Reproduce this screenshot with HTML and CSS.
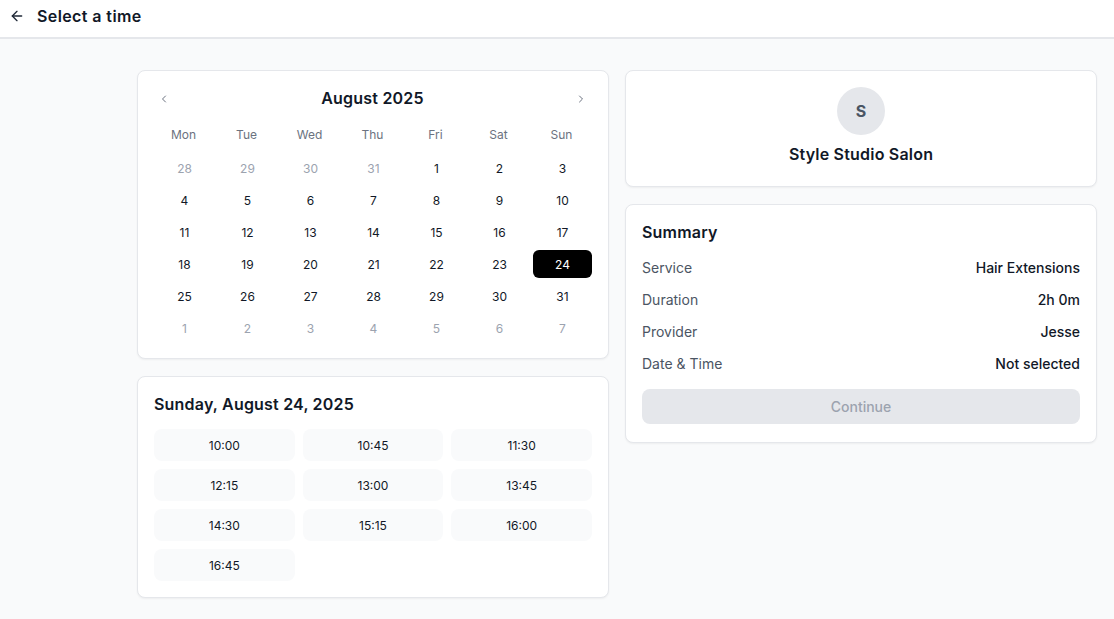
FILE: index.html
```html
<!DOCTYPE html>
<html>
<head>
<meta charset="utf-8">
<link rel="stylesheet" href="styles.css">
</head>
<body>
<header class="topbar">
  <button class="back" aria-label="Back">
    <svg width="16" height="16" viewBox="0 0 24 24" fill="none" stroke="#1f2937" stroke-width="2" stroke-linecap="round" stroke-linejoin="round"><path d="M19 12H5"/><path d="M12 19l-7-7 7-7"/></svg>
  </button>
  <h1 class="title">Select a time</h1>
</header>
<main class="page">
  <div class="col">
    <section class="card calendar">
      <div class="cal-head">
        <button class="nav"><svg width="12" height="12" viewBox="0 0 24 24" fill="none" stroke="#6b7280" stroke-width="2" stroke-linecap="round" stroke-linejoin="round"><path d="M15 18l-6-6 6-6"/></svg></button>
        <div class="month">August 2025</div>
        <button class="nav"><svg width="12" height="12" viewBox="0 0 24 24" fill="none" stroke="#6b7280" stroke-width="2" stroke-linecap="round" stroke-linejoin="round"><path d="M9 18l6-6-6-6"/></svg></button>
      </div>
      <div class="grid">
        <div class="wd">Mon</div><div class="wd">Tue</div><div class="wd">Wed</div><div class="wd">Thu</div><div class="wd">Fri</div><div class="wd">Sat</div><div class="wd">Sun</div>
        <div class="d out">28</div><div class="d out">29</div><div class="d out">30</div><div class="d out">31</div><div class="d">1</div><div class="d">2</div><div class="d">3</div>
        <div class="d">4</div><div class="d">5</div><div class="d">6</div><div class="d">7</div><div class="d">8</div><div class="d">9</div><div class="d">10</div>
        <div class="d">11</div><div class="d">12</div><div class="d">13</div><div class="d">14</div><div class="d">15</div><div class="d">16</div><div class="d">17</div>
        <div class="d">18</div><div class="d">19</div><div class="d">20</div><div class="d">21</div><div class="d">22</div><div class="d">23</div><div class="d sel">24</div>
        <div class="d">25</div><div class="d">26</div><div class="d">27</div><div class="d">28</div><div class="d">29</div><div class="d">30</div><div class="d">31</div>
        <div class="d out">1</div><div class="d out">2</div><div class="d out">3</div><div class="d out">4</div><div class="d out">5</div><div class="d out">6</div><div class="d out">7</div>
      </div>
    </section>
    <section class="card times">
      <h2 class="h2">Sunday, August 24, 2025</h2>
      <div class="slots">
        <button class="slot">10:00</button><button class="slot">10:45</button><button class="slot">11:30</button>
        <button class="slot">12:15</button><button class="slot">13:00</button><button class="slot">13:45</button>
        <button class="slot">14:30</button><button class="slot">15:15</button><button class="slot">16:00</button>
        <button class="slot">16:45</button>
      </div>
    </section>
  </div>
  <div class="col">
    <section class="card salon">
      <div class="avatar">S</div>
      <div class="salon-name">Style Studio Salon</div>
    </section>
    <section class="card summary">
      <h2 class="h2">Summary</h2>
      <div class="row"><span class="lbl">Service</span><span class="val">Hair Extensions</span></div>
      <div class="row"><span class="lbl">Duration</span><span class="val">2h 0m</span></div>
      <div class="row"><span class="lbl">Provider</span><span class="val">Jesse</span></div>
      <div class="row"><span class="lbl">Date &amp; Time</span><span class="val">Not selected</span></div>
      <button class="continue" disabled>Continue</button>
    </section>
  </div>
</main>
</body>
</html>
```
FILE: styles.css
```css
* { box-sizing: border-box; }
html, body { margin: 0; padding: 0; }
body {
  font-family: "Inter", "Open Sans", sans-serif;
  background: #f9fafb;
  color: #111827;
  width: 1114px;
  height: 619px;
  overflow: hidden;
}
button { font-family: inherit; border: 0; background: none; padding: 0; cursor: pointer; }

.topbar {
  height: 39px;
  background: #fff;
  border-bottom: 2px solid #e5e7eb;
  display: flex;
  align-items: center;
  padding: 0 0 5px 9px;
  gap: 12px;
}
.back { display: flex; align-items: center; width: 16px; height: 16px; }
.title { margin: 0; font-size: 16px; font-weight: 600; color: #111827; letter-spacing: 0.4px; }

.page {
  display: flex;
  gap: 16px;
  padding: 31px 17px 0 137px;
}
.col { flex: 1; display: flex; flex-direction: column; gap: 17px; }

.card {
  background: #fff;
  border: 1px solid #e5e7eb;
  border-radius: 8px;
  box-shadow: 0 1px 2px rgba(0,0,0,0.05);
  padding: 16px;
}

.calendar { padding: 15px 15px 14px 14px; }
.cal-head {
  display: flex;
  align-items: center;
  justify-content: space-between;
  height: 24px;
  padding: 0 6px 0 6px;
  margin-bottom: 10px;
}
.nav { display: flex; width: 12px; height: 12px; transform: translateY(1px); }
.month { font-size: 16px; font-weight: 600; color: #111827; letter-spacing: 0.2px; }

.grid {
  display: grid;
  grid-template-columns: repeat(7, 1fr);
  grid-auto-rows: 32px;
}
.wd {
  font-size: 12px;
  color: #6b7280;
  display: flex; align-items: center; justify-content: center;
  height: 28px;
  align-self: start;
}
.d {
  font-size: 12px;
  color: #111827;
  display: flex; align-items: center; justify-content: center;
  height: 28px;
  margin: 0 1px 0 3px;
  align-self: center;
  border-radius: 6px;
}
.d.out { color: #9ca3af; }
.d.sel { background: #000; color: #fff; }

.times { padding: 15px 16px 16px; }
.h2 { margin: 0 0 13px; font-size: 16px; font-weight: 600; color: #111827; line-height: 24px; letter-spacing: 0.2px; }
.slots {
  display: grid;
  grid-template-columns: repeat(3, 1fr);
  gap: 8px;
}
.slot {
  height: 32px;
  background: #f9fafb;
  border-radius: 8px;
  font-size: 12px;
  color: #111827;
}

.salon {
  display: flex; flex-direction: column; align-items: center;
  padding: 16px 16px 20px;
}
.avatar {
  width: 48px; height: 48px; border-radius: 50%;
  background: #e5e7eb;
  color: #4b5563;
  font-weight: 700; font-size: 16px;
  display: flex; align-items: center; justify-content: center;
}
.salon-name { margin-top: 7px; font-size: 16px; font-weight: 600; line-height: 24px; letter-spacing: 0.2px; }

.summary { padding: 15px 16px 18px; }
.summary .h2 { margin-bottom: 7px; }
.row {
  display: flex; justify-content: space-between; align-items: center;
  height: 32px;
  font-size: 14px;
}
.lbl { color: #4b5563; }
.val { font-weight: 500; color: #111827; }
.continue {
  margin-top: 10px;
  width: 100%;
  height: 35px;
  border-radius: 8px;
  background: #e5e7eb;
  color: #9ca3af;
  font-size: 14px;
  font-weight: 500;
}
```
